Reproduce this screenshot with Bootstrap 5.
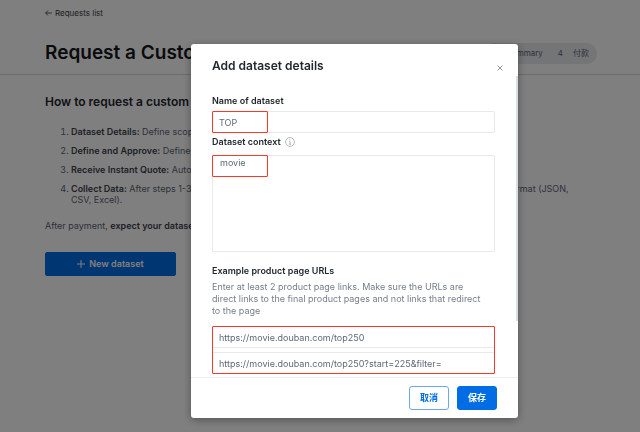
<!DOCTYPE html>
<html lang="en">
<head>
<meta charset="utf-8">
<meta name="viewport" content="width=device-width, initial-scale=1">
<title>Request a Custom Dataset</title>
<link href="https://cdn.jsdelivr.net/npm/bootstrap@5.3.0/dist/css/bootstrap.min.css" rel="stylesheet">
<style>
body { font-family: Inter, "Noto Sans CJK SC", sans-serif; font-size: 9px; line-height: 11px; color: #5d6573; overflow: hidden; }
strong { font-weight: 600; color: #3c424d; }
.page-x { padding-left: 45px; padding-right: 43px; }
.page-head { padding-top: 7px; padding-bottom: 10px; border-bottom: 1px solid #d4d7da; }
.back-link { font-size: 8px; line-height: 12px; color: #343a40; gap: 3px; }
.page-title { font-size: 19px; line-height: 22px; font-weight: 600; color: #14171a; }
.title-row { margin-top: 23px; }
.steps { height: 21px; gap: 15px; padding: 0 8px; font-size: 8px; background: #e6eaee; color: #5d6573; }
.steps .step-num { margin-right: 10px; }
.guide { padding-top: 20px; }
.guide h2 { font-size: 12px; line-height: 14px; font-weight: 600; color: #22262c; margin-bottom: 17px; }
.guide ol { padding-left: 26px; padding-right: 16px; margin-bottom: 15px; }
.guide li { margin-bottom: 8px; }
.guide li::marker { color: #5d6573; }
.blue-btn { background: #006de4; border-color: #006de4; color: #fff; font-weight: 600; border-radius: 2px; }
.new-btn { width: 131px; height: 24px; margin-top: 21px; padding: 0; font-size: 9px; gap: 4px; }
.details-dialog { max-width: none; margin: 44px 122px 14px 191px; }
.details-dialog .modal-content { border: 0; border-radius: 3px; box-shadow: 0 2px 8px rgba(0, 0, 0, .35); color: #767e8a; }
.details-dialog .modal-header { padding: 14px 15px 2px 21px; border: 0; }
.details-dialog .modal-title { font-size: 12px; line-height: 16px; font-weight: 600; color: #22282e; }
.close-btn { width: 6px; height: 6px; margin-top: 7px; color: #8f969e; line-height: 0; }
.details-dialog .modal-body { padding: 19px 23px 3px 21px; }
.scroll-thumb { position: absolute; top: 0; right: 0; width: 2px; bottom: 56px; background: #d9dee2; }
.field-label { font-size: 9px; line-height: 12px; font-weight: 600; color: #22282e; margin: 0; }
.field { display: block; padding: 0 6px; font-size: 9px; line-height: 12px; color: #5c6878; border: 1px solid #e7e9eb; border-radius: 2px; }
.field-line { height: 22px; }
.field-area { height: 97px; padding: 1px 7px; resize: none; }
.name-label { margin-bottom: 4px; }
.context-label { margin: 3px 0 7px; gap: 4px; }
.urls-label { margin: 13px 0 4px; }
.url-hint { font-size: 9px; line-height: 12px; margin-bottom: 9px; padding-right: 7px; }
.url-group { gap: 4px; }
.callout { position: absolute; border: 1px solid #f4392d; border-radius: 1px; pointer-events: none; }
.callout-word { top: 0; left: 0; width: 56px; height: 22px; }
.callout-group { inset: 0; }
.details-dialog .modal-footer { padding: 8px 21px 8px; gap: 8px; border-top: 1px solid #eceeef; }
.details-dialog .modal-footer .btn { height: 24px; margin: 0; padding: 0 10px; font-size: 9px; line-height: 22px; font-weight: 700; border-radius: 3px; }
.line-btn { color: #006de4; border-color: #6aa9ef; background: #fff; }
</style>
</head>
<body>
<header class="page-head page-x">
  <a href="#" class="back-link d-inline-flex align-items-center text-decoration-none">
    <svg width="7" height="6" viewBox="0 0 7 6" fill="none" stroke="currentColor" stroke-width=".8"><path d="M7 3H.6M3 .5.6 3 3 5.5"/></svg>
    Requests list
  </a>
  <div class="title-row d-flex align-items-center justify-content-between">
    <h1 class="page-title mb-0">Request a Custom Dataset</h1>
    <div class="steps d-flex align-items-center rounded-pill">
      <span><span class="step-num">3</span>Summary</span>
      <span><span class="step-num">4</span>付款</span>
    </div>
  </div>
</header>
<main class="guide page-x">
  <h2>How to request a custom dataset</h2>
  <ol>
    <li><strong>Dataset Details:</strong> Define scope and context.</li>
    <li><strong>Define and Approve:</strong> Define parameters and approve.</li>
    <li><strong>Receive Instant Quote:</strong> Auto generated quote.</li>
    <li><strong>Collect Data:</strong> After steps 1-3 are completed, we'll collect your data and send it to you in your preferred format (JSON, CSV, Excel).</li>
  </ol>
  <p class="mb-0">After payment, <strong>expect your dataset</strong> soon.</p>
  <button type="button" class="btn blue-btn new-btn d-flex align-items-center justify-content-center">
    <svg width="8" height="8" viewBox="0 0 8 8" stroke="currentColor"><path d="M4 0v8M0 4h8"/></svg>
    New dataset
  </button>
</main>

<div class="modal-backdrop show"></div>
<div class="modal d-block overflow-hidden" tabindex="-1" role="dialog" aria-labelledby="detailsTitle">
  <div class="modal-dialog details-dialog">
    <form class="modal-content">
      <div class="modal-header align-items-start">
        <h2 class="modal-title" id="detailsTitle">Add dataset details</h2>
        <button type="button" class="close-btn btn border-0 p-0" aria-label="Close">
          <svg class="d-block" width="6" height="6" viewBox="0 0 6 6" stroke="currentColor"><path d="m.5.5 5 5M5.5.5l-5 5"/></svg>
        </button>
      </div>
      <div class="modal-body">
        <label class="field-label name-label d-block" for="dsName">Name of dataset</label>
        <div class="position-relative">
          <input id="dsName" class="field field-line w-100" type="text" value="TOP">
          <span class="callout callout-word"></span>
        </div>
        <div class="context-label d-flex align-items-center">
          <label class="field-label" for="dsContext">Dataset context</label>
          <svg width="10" height="10" viewBox="0 0 10 10" fill="none" stroke="#9299a1" stroke-width=".7"><circle cx="5" cy="5" r="4.4"/><path d="M4.2 4.4H5v2.8M4 7.2h2M4.8 2.4v.9"/></svg>
        </div>
        <div class="position-relative">
          <textarea id="dsContext" class="field field-area w-100">movie</textarea>
          <span class="callout callout-word"></span>
        </div>
        <label class="field-label urls-label d-block" for="urlOne">Example product page URLs</label>
        <p class="url-hint">Enter at least 2 product page links. Make sure the URLs are direct links to the final product pages and not links that redirect to the page</p>
        <div class="url-group d-flex flex-column position-relative">
          <input id="urlOne" class="field field-line w-100" type="text" value="https://movie.douban.com/top250">
          <input class="field field-line w-100" type="text" aria-label="Second product page URL" value="https://movie.douban.com/top250?start=225&amp;filter=">
          <span class="callout callout-group"></span>
        </div>
        <span class="scroll-thumb"></span>
      </div>
      <div class="modal-footer">
        <button type="button" class="btn line-btn">取消</button>
        <button type="submit" class="btn blue-btn">保存</button>
      </div>
    </form>
  </div>
</div>
<script src="https://cdn.jsdelivr.net/npm/bootstrap@5.3.0/dist/js/bootstrap.bundle.min.js"></script>
</body>
</html>
